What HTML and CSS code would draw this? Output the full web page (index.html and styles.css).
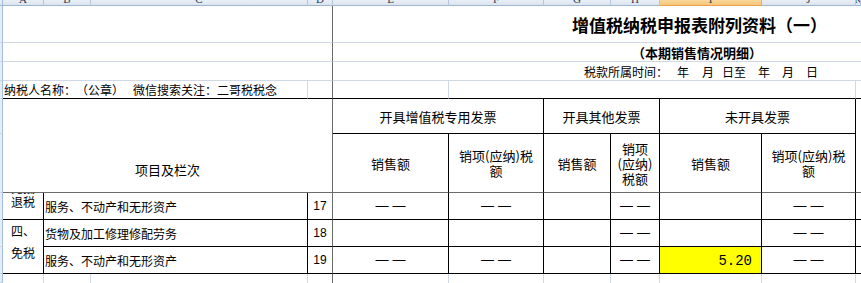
FILE: index.html
```html
<!DOCTYPE html>
<html lang="zh-CN">
<head>
<meta charset="utf-8">
<title>增值税纳税申报表附列资料（一）</title>
<link rel="stylesheet" href="styles.css">
</head>
<body>
<div class="sheet">
  <!-- column header strip -->
  <div class="colh corner"></div>
  <div class="colh"><span>A</span></div>
  <div class="colh"><span>B</span></div>
  <div class="colh"><span>C</span></div>
  <div class="colh"><span>D</span></div>
  <div class="colh"><span>E</span></div>
  <div class="colh"><span>F</span></div>
  <div class="colh"><span>G</span></div>
  <div class="colh"><span>H</span></div>
  <div class="colh sel"><span>I</span></div>
  <div class="colh"><span>J</span></div>
  <div class="colh"><span>K</span></div>

  <!-- row 1: title -->
  <div class="stub"></div>
  <div class="c s4 gb fr"></div>
  <div class="c s7 gb title">增值税纳税申报表附列资料（一）</div>

  <!-- row 2: subtitle -->
  <div class="stub"></div>
  <div class="c s4 gb fr"></div>
  <div class="c s7 gb subtitle">（本期销售情况明细）</div>

  <!-- row 3: period -->
  <div class="stub"></div>
  <div class="c s4 gb fr"></div>
  <div class="c s7 gb period">税款所属时间：<span class="m9">年</span><span class="m13">月</span><span class="m8">日至</span><span class="m12">年</span><span class="m12">月</span><span class="m12">日</span></div>

  <!-- row 4: taxpayer -->
  <div class="stub"></div>
  <div class="c s3 gr bb left taxpayer">纳税人名称：（公章）<span class="m9">微信搜索关注：二哥税税念</span></div>
  <div class="c fr bb"></div>
  <div class="c gr bb"></div>
  <div class="c s5 gr bb"></div>
  <div class="c bb"></div>

  <!-- header row 1 -->
  <div class="stub"></div>
  <div class="c s4 r2 fr fb hd item">项目及栏次</div>
  <div class="c s2 br bb hd">开具增值税专用发票</div>
  <div class="c s2 br bb hd">开具其他发票</div>
  <div class="c s2 br bb hd">未开具发票</div>
  <div class="c r2 fb"></div>

  <!-- header row 2 -->
  <div class="stub"></div>
  <div class="c br fb hd">销售额</div>
  <div class="c br fb hd ml">销项(应纳)税<br>额</div>
  <div class="c br fb hd">销售额</div>
  <div class="c br fb hd ml">销项<br>(应纳)<br>税额</div>
  <div class="c br fb hd">销售额</div>
  <div class="c br fb hd ml">销项(应纳)税<br>额</div>

  <!-- row 17 -->
  <div class="stub"></div>
  <div class="c br bb cat17"><div>免抵</div><div>退税</div></div>
  <div class="c s2 br bb left">服务、不动产和无形资产</div>
  <div class="c fr bb rn">17</div>
  <div class="c br bb"><span class="dash"><span>—</span><span>—</span></span></div>
  <div class="c br bb"><span class="dash"><span>—</span><span>—</span></span></div>
  <div class="c br bb"></div>
  <div class="c br bb"><span class="dash"><span>—</span><span>—</span></span></div>
  <div class="c br bb"></div>
  <div class="c br bb"><span class="dash"><span>—</span><span>—</span></span></div>
  <div class="c bb"></div>

  <!-- row 18 -->
  <div class="stub"></div>
  <div class="c r2 br bb cat18"><div>四、</div><div>免税</div></div>
  <div class="c s2 br bb left">货物及加工修理修配劳务</div>
  <div class="c fr bb rn">18</div>
  <div class="c br bb"></div>
  <div class="c br bb"></div>
  <div class="c br bb"></div>
  <div class="c br bb"><span class="dash"><span>—</span><span>—</span></span></div>
  <div class="c br bb"></div>
  <div class="c br bb"><span class="dash"><span>—</span><span>—</span></span></div>
  <div class="c bb"></div>

  <!-- row 19 -->
  <div class="stub"></div>
  <div class="c s2 br bb left">服务、不动产和无形资产</div>
  <div class="c fr bb rn">19</div>
  <div class="c br bb"><span class="dash"><span>—</span><span>—</span></span></div>
  <div class="c br bb"><span class="dash"><span>—</span><span>—</span></span></div>
  <div class="c br bb"></div>
  <div class="c br bb"><span class="dash"><span>—</span><span>—</span></span></div>
  <div class="c br bb hl amount">5.20</div>
  <div class="c br bb"><span class="dash"><span>—</span><span>—</span></span></div>
  <div class="c bb"></div>

  <!-- row 20 (empty) -->
  <div class="stub"></div>
  <div class="c gr"></div>
  <div class="c gr"></div>
  <div class="c gr"></div>
  <div class="c fr"></div>
  <div class="c gr"></div>
  <div class="c gr"></div>
  <div class="c gr"></div>
  <div class="c gr"></div>
  <div class="c gr"></div>
  <div class="c gr"></div>
  <div class="c"></div>
</div>
</body>
</html>
```
FILE: styles.css
```css
* {
  box-sizing: border-box;
  margin: 0;
  padding: 0;
}

html,
body {
  width: 861px;
  height: 283px;
  overflow: hidden;
  background: #fff;
}

body {
  font-family: "Noto Sans CJK SC", "Noto Sans", sans-serif;
  font-size: 12px;
  color: #000;
  text-spacing-trim: space-all;
}

.sheet {
  display: grid;
  grid-template-columns: 3px 41px 47px 217px 25px 116px 95px 67px 49px 102px 94px 1fr;
  grid-template-rows: 6px 37px 19px 19px 18px 35px 59px 27px 27px 27px 1fr;
  height: 283px;
}

/* column header strip */
.colh {
  display: flex;
  align-items: flex-end;
  justify-content: center;
  overflow: hidden;
  background: linear-gradient(#eaeff6, #dce4ee);
  border-right: 1px solid #b8c8dc;
  border-bottom: 1px solid #9eb6ce;
  font-family: "Liberation Serif", serif;
  font-size: 11px;
  line-height: 11px;
  color: #263c50;
}

.colh.corner {
  border-right: 1px solid #a3bde3;
}

.colh.sel {
  background: linear-gradient(#f9d89a, #f5c57a);
  border-bottom-color: #eaa043;
  border-right-color: #e9b060;
}

/* row header stub at the left edge */
.stub {
  background: #e4ecf7;
  border-right: 1px solid #a3bde3;
  border-bottom: 1px solid #c9d6ea;
}

/* generic cell */
.c {
  display: flex;
  align-items: center;
  justify-content: center;
  overflow: hidden;
  white-space: nowrap;
  line-height: 15px;
}

.s2 { grid-column: span 2; }
.s3 { grid-column: span 3; }
.s4 { grid-column: span 4; }
.s5 { grid-column: span 5; }
.s7 { grid-column: span 7; }
.r2 { grid-row: span 2; }

/* borders */
.gb { border-bottom: 1px solid #d0d7e5; }
.gr { border-right: 1px solid #d0d7e5; }
.bb { border-bottom: 1px solid #000; }
.br { border-right: 1px solid #000; }
.fr { border-right: 1px solid #6b6b6b; }
.fb { border-bottom: 1px solid #6b6b6b; }

.left {
  justify-content: flex-start;
  padding-left: 1px;
}

/* top area */
.title {
  justify-content: flex-start;
  padding-left: 239px;
  padding-top: 2px;
  font-size: 17px;
  font-weight: 700;
  line-height: 20px;
}

.subtitle {
  justify-content: flex-start;
  padding-left: 299px;
  font-size: 13px;
  font-weight: 700;
}

.period {
  justify-content: flex-start;
  padding-left: 251px;
}

.m8 { margin-left: 8px; }
.m9 { margin-left: 9px; }
.m12 { margin-left: 12px; }
.m13 { margin-left: 13px; }

/* table header */
.hd {
  font-size: 13px;
  text-align: center;
  white-space: normal;
}

.ml {
  line-height: 15px;
}

.item {
  align-items: flex-end;
  padding-bottom: 14px;
  line-height: 17px;
}

/* body */
.cat17 {
  flex-direction: column;
  justify-content: flex-end;
  align-items: center;
  padding-bottom: 10px;
  line-height: 14px;
}

.cat18 {
  flex-direction: column;
  justify-content: flex-start;
  align-items: center;
  padding-top: 4px;
  gap: 8px;
  line-height: 14px;
}

.rn {
  font-family: "Liberation Sans", sans-serif;
  font-size: 12px;
}

.dash {
  display: inline-flex;
  gap: 4px;
  font-family: "Liberation Sans", sans-serif;
  font-size: 13px;
  line-height: 13px;
  padding-bottom: 2px;
}

.dash span {
  display: inline-block;
  width: 13px;
  text-align: center;
}

.hl {
  background: #ffff00;
}

.amount {
  justify-content: flex-end;
  padding-right: 9px;
  padding-top: 2px;
  font-family: "Liberation Mono", monospace;
  font-size: 14px;
}
```
